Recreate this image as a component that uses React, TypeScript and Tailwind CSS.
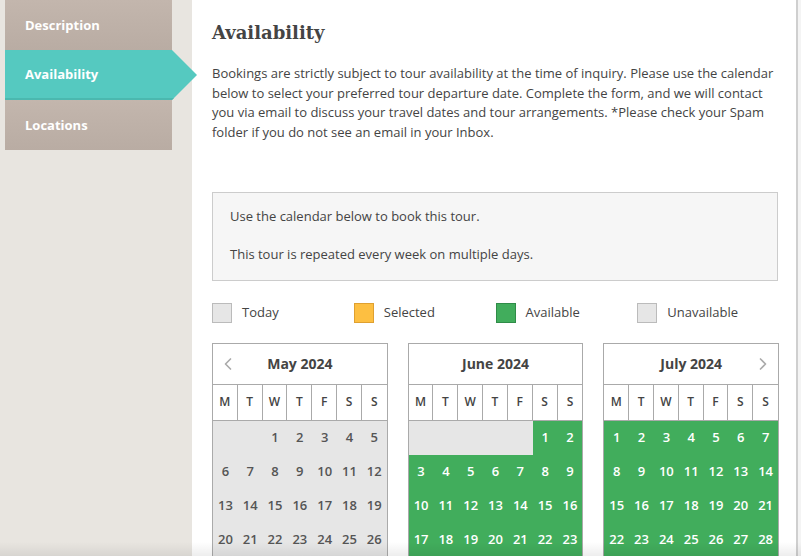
import React from "react";
import { ChevronLeft, ChevronRight } from "lucide-react";

type Month = {
  name: string;
  offset: number;
  days: number;
  // first day that shows as available (green), 0 = none
  availableFrom: number;
  prev?: boolean;
  next?: boolean;
};

const months: Month[] = [
  { name: "May 2024", offset: 2, days: 31, availableFrom: 0, prev: true },
  { name: "June 2024", offset: 5, days: 30, availableFrom: 1 },
  { name: "July 2024", offset: 0, days: 31, availableFrom: 1, next: true },
];

const weekDays = ["M", "T", "W", "T", "F", "S", "S"];

const Calendar: React.FC<{ month: Month }> = ({ month }) => {
  const cells: (number | null)[] = [];
  for (let i = 0; i < month.offset; i++) cells.push(null);
  for (let d = 1; d <= month.days; d++) cells.push(d);

  return (
    <div className="w-[176px] border border-[#aaa] bg-white">
      {/* Header */}
      <div className="h-[41px] flex items-center border-b border-[#aaa]">
        <div className="w-[28px] flex justify-center pl-[2px]">
          {month.prev && <ChevronLeft size={20} strokeWidth={2} className="text-[#aaa]" />}
        </div>
        <div className="flex-1 text-center text-[14px] font-bold text-[#444]">{month.name}</div>
        <div className="w-[28px] flex justify-center pr-[2px]">
          {month.next && <ChevronRight size={20} strokeWidth={2} className="text-[#aaa]" />}
        </div>
      </div>

      {/* Day names */}
      <div className="grid grid-cols-7 border-b border-[#aaa]">
        {weekDays.map((d, i) => (
          <div
            key={i}
            className={`h-[35px] flex items-center justify-center text-[12px] font-semibold text-[#444] ${
              i < 6 ? "border-r border-[#aaa]" : ""
            }`}
          >
            {d}
          </div>
        ))}
      </div>

      {/* Days */}
      <div className="grid grid-cols-7">
        {cells.map((d, i) => {
          const available = d !== null && month.availableFrom > 0 && d >= month.availableFrom;
          return (
            <div
              key={i}
              className={`h-[34px] flex items-center justify-center text-[13px] font-semibold ${
                available ? "bg-[#41ad5c] text-white" : "bg-[#e6e6e6] text-[#555]"
              }`}
            >
              {d}
            </div>
          );
        })}
      </div>
    </div>
  );
};

const LegendItem: React.FC<{ label: string; box: string }> = ({ label, box }) => (
  <div className="flex items-center gap-[10px]">
    <div className={`w-[20px] h-[20px] border ${box}`}></div>
    <span className="text-[13px] text-[#444]">{label}</span>
  </div>
);

export default function App() {
  return (
    <div className="relative w-[801px] h-[556px] overflow-hidden flex bg-[#f4f4f4] font-['Open_Sans',sans-serif]">
      {/* Sidebar tabs */}
      <div className="w-[192px] shrink-0 bg-[#e8e5e0] pl-[5px] relative z-10">
        <div className="w-[167px] h-[50px] flex items-center pl-[20px] pt-[2px] bg-gradient-to-b from-[#c3b6ad] to-[#b9aca3] text-white text-[13px] font-bold">
          Description
        </div>
        <div className="w-[192px] h-[50px] flex items-center pl-[20px] pt-[2px] bg-[#55c9c0] border-b-2 border-[#4bb8af] text-white text-[13px] font-bold [clip-path:polygon(0_0,167px_0,192px_50%,167px_100%,0_100%)]">
          Availability
        </div>
        <div className="w-[167px] h-[50px] flex items-center pl-[20px] pt-[2px] bg-gradient-to-b from-[#c3b6ad] to-[#b9aca3] text-white text-[13px] font-bold">
          Locations
        </div>
      </div>

      {/* Main panel */}
      <div className="w-[606px] shrink-0 bg-white border-r-2 border-[#cfcfcf] pl-5 pr-[17px] shadow-[-5px_0_6px_-2px_rgba(0,0,0,0.12)]">
        <h2 className="mt-[21px] text-[18px] leading-[24px] font-bold text-[#444] font-['DejaVu_Serif',serif]">
          Availability
        </h2>
        <p className="mt-[19px] text-[13px] leading-[19.7px] text-[#444]">
          Bookings are strictly subject to tour availability at the time of inquiry. Please use the calendar
          below to select your preferred tour departure date. Complete the form, and we will contact you via
          email to discuss your travel dates and tour arrangements. *Please check your Spam folder if you do
          not see an email in your Inbox.
        </p>

        {/* Info box */}
        <div className="mt-[49px] w-[566px] border border-[#ccc] bg-[#f6f6f6] pl-[17px] pt-[13px] pb-[16px] text-[13px] leading-[20px] text-[#444]">
          <p>Use the calendar below to book this tour.</p>
          <p className="mt-[18px]">This tour is repeated every week on multiple days.</p>
        </div>

        {/* Legend */}
        <div className="mt-[22px] grid grid-cols-4">
          <LegendItem label="Today" box="bg-[#e6e6e6] border-[#bbb]" />
          <LegendItem label="Selected" box="bg-[#fdbf41] border-[#dfa030]" />
          <LegendItem label="Available" box="bg-[#41ad5c] border-[#2f8c48]" />
          <LegendItem label="Unavailable" box="bg-[#e6e6e6] border-[#bbb]" />
        </div>

        {/* Calendars */}
        <div className="mt-[20px] flex gap-5">
          {months.map((m) => (
            <Calendar key={m.name} month={m} />
          ))}
        </div>
      </div>

      <div className="flex-1"></div>

      {/* bottom fade */}
      <div className="absolute left-0 right-0 bottom-0 h-[14px] bg-gradient-to-b from-transparent to-[rgba(0,0,0,0.07)] pointer-events-none z-20"></div>
    </div>
  );
}
